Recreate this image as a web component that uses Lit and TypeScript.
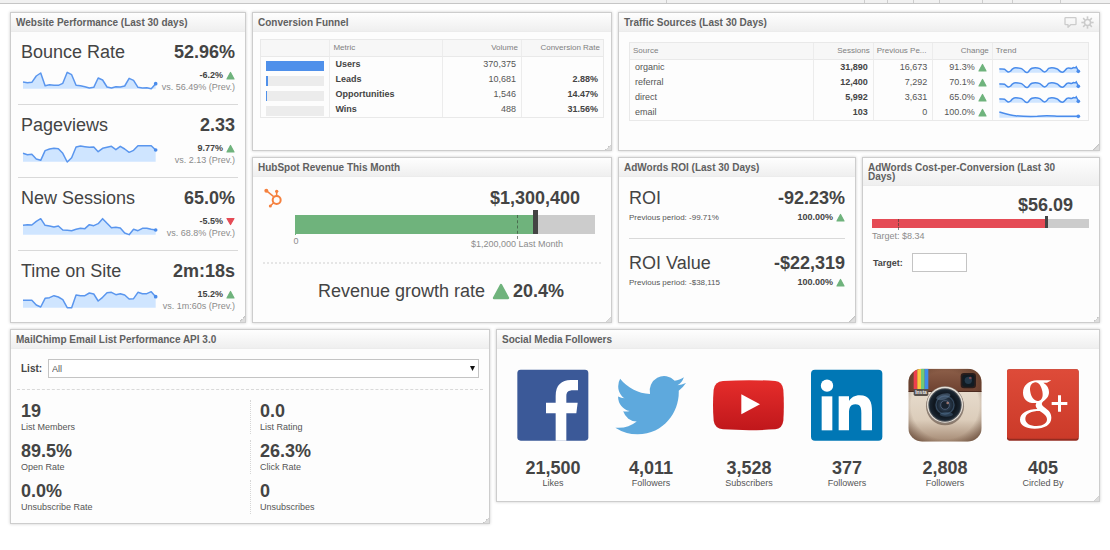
import { LitElement, html, svg, css, nothing, TemplateResult } from "lit";
import { customElement, property } from "lit/decorators.js";

/* ---------- shared pieces ---------- */

const shared = css`
  * { box-sizing: border-box; }
  .big { font-size: 18px; line-height: 20px; color: #444; white-space: nowrap; }
  .strong { font-weight: bold; }
  .small { font-size: 9px; line-height: 11px; color: #555; white-space: nowrap; }
  .muted { color: #8c8c8c; }
  .row { display: flex; justify-content: space-between; align-items: baseline; }
  .delta { display: flex; justify-content: flex-end; align-items: center; gap: 3px; font-weight: bold; color: #444; }
`;

const triangle = (up: boolean, size = 9) => svg`
  <svg width=${size} height=${size} viewBox="0 0 18 18" aria-hidden="true">
    <path d=${up ? "M9 3 L16 16 H2 Z" : "M9 15 L2 3 H16 Z"}
      fill=${up ? "#6fb37c" : "#e54b55"} stroke=${up ? "#6fb37c" : "#e54b55"}
      stroke-width="2.4" stroke-linejoin="round" />
  </svg>`;

@customElement("dash-panel")
export class DashPanel extends LitElement {
  @property() heading = "";
  @property({ type: Boolean }) tools = false;

  static styles = css`
    :host {
      display: flex; flex-direction: column; position: relative; min-width: 0;
      box-sizing: border-box; border: 1px solid #cdcdcd; background: #fdfdfd;
      box-shadow: 0 0 3px rgba(0, 0, 0, 0.2);
    }
    :host::after {
      content: ""; position: absolute; right: 0; bottom: 0; width: 6px; height: 6px;
      background: linear-gradient(135deg, transparent 50%, #c4c4c4 50%, #dedede 65%);
    }
    header {
      display: flex; justify-content: space-between; align-items: flex-start;
      padding: 5px 5px 4px 5px; border-bottom: 1px solid #ececec;
      background: linear-gradient(#fefefe, #efefef);
    }
    h2 { margin: 0; padding-right: 24px; font-size: 10px; line-height: 9px; font-weight: bold; color: #606060; }
    .tools { display: flex; gap: 4px; height: 9px; align-items: center; }
    button { display: block; padding: 0; border: 0; background: none; line-height: 0; cursor: pointer; }
  `;

  render() {
    return html`
      <header>
        <h2>${this.heading}</h2>
        ${this.tools
          ? html`<div class="tools">
              <button aria-label="Comment">
                <svg width="13" height="13" viewBox="0 0 39 39">
                  <path d="M5 5 H34 Q36 5 36 7 V24 Q36 26 34 26 H20 L12 34 V26 H5 Q3 26 3 24 V7 Q3 5 5 5 Z"
                    fill="none" stroke="#cccccc" stroke-width="4" stroke-linejoin="round" />
                </svg>
              </button>
              <button aria-label="Settings">
                <svg width="13" height="13" viewBox="0 0 36 36">
                  <circle cx="18" cy="18" r="8.5" fill="none" stroke="#cacaca" stroke-width="4.4" />
                  ${[0, 45, 90, 135, 180, 225, 270, 315].map(
                    (a) => svg`<path d="M18 1 V8" stroke="#cacaca" stroke-width="4.4" transform="rotate(${a} 18 18)" />`
                  )}
                </svg>
              </button>
            </div>`
          : nothing}
      </header>
      <slot></slot>
    `;
  }
}

/* ---------- website performance ---------- */

const performance30 = [
  { name: "Bounce Rate", value: "52.96%", delta: "-6.2%", up: true, prev: "vs. 56.49% (Prev.)",
    points: [36,38,37,18,9,47,44,46,46,40,7,14,46,47,50,54,52,24,30,51,54,50,51,48,25,31,52,54,53,56,41] },
  { name: "Pageviews", value: "2.33", delta: "9.77%", up: true, prev: "vs. 2.13 (Prev.)",
    points: [31,35,34,48,52,23,18,16,17,31,57,44,12,9,11,13,12,26,16,13,10,20,10,18,28,22,8,8,8,8,21] },
  { name: "New Sessions", value: "65.0%", delta: "-5.5%", up: false, prev: "vs. 68.8% (Prev.)",
    points: [28,26,27,16,8,28,30,33,30,42,43,44,40,37,38,26,29,23,8,22,35,34,36,51,56,40,44,37,37,40,42] },
  { name: "Time on Site", value: "2m:18s", delta: "15.2%", up: true, prev: "vs. 1m:60s (Prev.)",
    points: [34,34,34,48,54,28,26,20,24,32,56,56,18,20,20,12,15,36,25,11,10,17,14,18,30,29,10,14,14,8,23] },
];

const sparkline = (points: number[]) => {
  const step = 398 / (points.length - 1);
  const line = points.map((y, i) => `${(3 + i * step).toFixed(1)},${y}`).join(" ");
  return html`<svg class="spark" width="136" height="20" viewBox="0 0 408 60" aria-hidden="true">
    <polygon points="3,56 ${line} 401,56" fill="#cfe5ff" />
    <polyline points=${line} fill="none" stroke="#5a96ee" stroke-width="4.5" stroke-linejoin="round" />
    <circle cx="401" cy=${points[points.length - 1]} r="5.5" fill="#4a8ceb" />
  </svg>`;
};

@customElement("site-performance")
export class SitePerformance extends LitElement {
  static styles = [shared, css`
    :host { display: block; padding: 0 7px; }
    .item { padding: 10px 3px 11px 3px; border-bottom: 1px solid #d9d9d9; }
    .item:last-child { border-bottom: 0; padding-bottom: 0; }
    .detail { display: flex; justify-content: space-between; align-items: flex-start; margin-top: 7px; line-height: 0; }
    .spark { margin: 1px 0 0 1px; }
    .side { text-align: right; }
    .side .small { line-height: 12px; }
  `];
  render() {
    return performance30.map((m) => html`
      <div class="item">
        <div class="row big"><span>${m.name}</span><span class="strong">${m.value}</span></div>
        <div class="detail">
          ${sparkline(m.points)}
          <div class="side">
            <div class="small delta">${m.delta}${triangle(m.up)}</div>
            <div class="small muted">${m.prev}</div>
          </div>
        </div>
      </div>`);
  }
}

/* ---------- tables ---------- */

const tableStyles = css`
  table { width: 100%; border-collapse: separate; border-spacing: 0; table-layout: fixed;
    border: 1px solid #e9e9e9; font-size: 9px; color: #555; }
  th { height: 17px; padding: 0 3px; background: #f7f7f7; border-bottom: 1px solid #e9e9e9; font-size: 8px;
    font-weight: normal; color: #808080; text-align: left; line-height: 12px; white-space: nowrap; }
  td { height: 15px; padding: 0 5px; line-height: 15px; white-space: nowrap; }
  th + th, td + td { border-left: 1px solid #ececec; }
  .num { text-align: right; }
  .strong { color: #444; }
`;

const funnel = [
  { metric: "Users", volume: "370,375", rate: "", share: 100 },
  { metric: "Leads", volume: "10,681", rate: "2.88%", share: 3 },
  { metric: "Opportunities", volume: "1,546", rate: "14.47%", share: 1 },
  { metric: "Wins", volume: "488", rate: "31.56%", share: 0 },
];

@customElement("conversion-funnel")
export class ConversionFunnel extends LitElement {
  static styles = [shared, tableStyles, css`
    :host { display: block; padding: 7px; }
    .c1 { width: 20%; } .c2 { width: 33%; } .c3 { width: 23%; }
    td:first-child { vertical-align: bottom; }
    .track { height: 10px; margin-bottom: 1px; background: #ececec; }
    .fill { height: 100%; background: #4f90ea; }
  `];
  render() {
    return html`<table>
      <thead><tr>
        <th class="c1" aria-label="Share"></th><th class="c2">Metric</th>
        <th class="c3 num">Volume</th><th class="num">Conversion Rate</th>
      </tr></thead>
      <tbody>${funnel.map((r) => html`<tr>
        <td><div class="track"><div class="fill" style="width:${r.share}%"></div></div></td>
        <td class="strong">${r.metric}</td><td class="num">${r.volume}</td><td class="num strong">${r.rate}</td>
      </tr>`)}</tbody>
    </table>`;
  }
}

const wave = "M4 11 C10 13 14 11 20 13 C27 20 31 24 38 18 C45 6 53 8 62 9 C74 9 76 15 81 20 C88 26 91 21 96 14 C101 7 110 8 119 9 C130 10 131 17 137 20 C144 24 147 15 152 10 C160 7 170 9 176 11 C184 15 185 21 191 21 C198 24 201 14 207 10 C214 6 220 14 225 8 C229 7 232 11 235 6 L241 18";
const traffic = [
  { source: "organic", sessions: "31,890", prev: "16,673", change: "91.3%", trend: wave },
  { source: "referral", sessions: "12,400", prev: "7,292", change: "70.1%", trend: wave },
  { source: "direct", sessions: "5,992", prev: "3,631", change: "65.0%", trend: wave },
  { source: "email", sessions: "103", prev: "0", change: "100.0%",
    trend: "M4 6 C20 10 38 16 52 17 C80 20 98 20 118 19 C145 16 160 18 182 19 L241 19" },
];

@customElement("traffic-sources")
export class TrafficSources extends LitElement {
  static styles = [shared, tableStyles, css`
    :host { display: block; padding: 10px; }
    .c1 { width: 40%; } .c2, .c3, .c4 { width: 13%; }
    .delta { font-weight: normal; color: #555; }
    td.trend { vertical-align: bottom; line-height: 0; }
  `];
  render() {
    return html`<table>
      <thead><tr>
        <th class="c1">Source</th><th class="c2 num">Sessions</th><th class="c3" title="Previous Period">Previous Pe...</th>
        <th class="c4 num">Change</th><th>Trend</th>
      </tr></thead>
      <tbody>${traffic.map((r) => html`<tr>
        <td>${r.source}</td><td class="num strong">${r.sessions}</td><td class="num">${r.prev}</td>
        <td><div class="delta">${r.change}${triangle(true)}</div></td>
        <td class="trend"><svg width="83" height="10" viewBox="0 0 249 30" aria-hidden="true">
          <path d="${r.trend} V23 H4 Z" fill="#cfe5ff" />
          <path d=${r.trend} fill="none" stroke="#4a8ceb" stroke-width="4.5" />
          <circle cx="241" cy="19" r="5.5" fill="#4a8ceb" />
        </svg></td>
      </tr>`)}</tbody>
    </table>`;
  }
}

/* ---------- bullet bars ---------- */

@customElement("bullet-bar")
export class BulletBar extends LitElement {
  @property({ type: Number }) value = 0;
  @property({ type: Number }) target = 0;
  @property() label = "";
  @property() tone = "green";

  static styles = [shared, css`
    :host { display: block; }
    .anchor { display: flex; justify-content: center; width: 0; }
    .bar { position: relative; height: 19px; margin-top: 7px; background: #cccccc; }
    .fill { height: 100%; background: #6fb37c; }
    .marker { position: absolute; top: -5px; bottom: 0; width: 5px; margin-left: -2px; background: #444; }
    .target { position: absolute; top: 0; bottom: -5px; border-left: 1px dashed rgba(50, 60, 50, 0.6); }
    .red .bar { height: 9px; margin-top: 4px; }
    .red .fill { background: #e54b55; }
    .red .marker { top: -3px; width: 3px; margin-left: -1px; }
    .red .target { bottom: -2px; }
  `];
  render() {
    return html`<div class=${this.tone}>
      <div class="anchor" style="margin-left:${this.value}%"><span class="big strong">${this.label}</span></div>
      <div class="bar">
        <div class="fill" style="width:${this.value}%"></div>
        <div class="target" style="left:${this.target}%"></div>
        <div class="marker" style="left:${this.value}%"></div>
      </div>
    </div>`;
  }
}

@customElement("hubspot-revenue")
export class HubspotRevenue extends LitElement {
  static styles = [shared, css`
    :host { display: block; padding: 11px 10px 0 10px; }
    .chart { display: grid; grid-template-columns: 20px 1fr; column-gap: 12px; padding: 0 6px 0 0; }
    .scale { display: grid; grid-column: 2; }
    .scale > * { grid-area: 1 / 1; }
    .zero { width: 0; height: 13px; display: flex; justify-content: center; align-items: flex-end; border-left: 1px solid #6fb37c; border-image: linear-gradient(#6fb37c 2px, transparent 2px) 1; }
    .last { display: flex; justify-content: center; width: 0; padding-top: 5px; }
    .growth { display: flex; justify-content: center; align-items: center; gap: 7px; margin-top: 12px;
      padding: 17px 0 17px 18px; border-top: 2px dotted #e6e6e6; }
    .growth .strong { display: flex; align-items: center; gap: 3px; }
  `];
  render() {
    return html`
      <div class="chart">
        <svg width="20" height="20" viewBox="0 0 60 60" aria-label="HubSpot" role="img">
          <g stroke="#f5813f" fill="none">
            <circle cx="41" cy="36" r="12" stroke-width="6" />
            <path d="M10 8 L32 26 M41 10 V25 M32 44 L22 54" stroke-width="4.5" />
          </g>
          <g fill="#f5813f"><circle cx="10" cy="8" r="6" /><circle cx="41" cy="10" r="5" /><circle cx="22" cy="54" r="4.5" /></g>
        </svg>
        <bullet-bar value="80" target="74" label="$1,300,400"></bullet-bar>
        <div class="scale">
          <span class="zero small muted">0</span>
          <span class="last small muted" style="margin-left:74%">$1,200,000 Last Month</span>
        </div>
      </div>
      <div class="growth big">Revenue growth rate <span class="strong">${triangle(true, 18)}20.4%</span></div>
    `;
  }
}

@customElement("adwords-roi")
export class AdwordsRoi extends LitElement {
  static styles = [shared, css`
    :host { display: block; padding: 0 10px; }
    .item { padding: 11px 0 15px 0; }
    .item + .item { border-top: 1px solid #d9d9d9; padding-top: 14px; }
    .sub { margin-top: 4px; align-items: center; }
    .prev { font-size: 8px; }
  `];
  private item(name: string, value: string, prev: string) {
    return html`<div class="item">
      <div class="row big"><span>${name}</span><span class="strong">${value}</span></div>
      <div class="row sub small"><span class="prev">${prev}</span><span class="delta">100.00%${triangle(true)}</span></div>
    </div>`;
  }
  render() {
    return html`${this.item("ROI", "-92.23%", "Previous period: -99.71%")}
      ${this.item("ROI Value", "-$22,319", "Previous period: -$38,115")}`;
  }
}

@customElement("adwords-cost")
export class AdwordsCost extends LitElement {
  static styles = [shared, css`
    :host { display: block; padding: 9px 10px 0 9px; }
    .caption { margin-top: 3px; }
    .field { display: flex; align-items: center; gap: 9px; margin-top: 11px; padding-left: 1px; font-size: 9px; font-weight: bold; color: #444; }
    input { width: 55px; height: 19px; padding: 0 3px; border: 1px solid #c4c4c4; background: #fff; font: 9px "Liberation Sans", Arial, sans-serif; }
  `];
  render() {
    return html`
      <bullet-bar tone="red" value="80" target="12" label="$56.09"></bullet-bar>
      <div class="caption small muted">Target: $8.34</div>
      <div class="field"><label for="target">Target:</label><input id="target" type="text" /></div>
    `;
  }
}

/* ---------- mailchimp ---------- */

const listStats = [
  ["19", "List Members"], ["0.0", "List Rating"],
  ["89.5%", "Open Rate"], ["26.3%", "Click Rate"],
  ["0.0%", "Unsubscribe Rate"], ["0", "Unsubscribes"],
];

@customElement("mail-performance")
export class MailPerformance extends LitElement {
  static styles = [shared, css`
    :host { display: block; padding: 10px 6px 9px 6px; }
    .field { display: flex; align-items: center; gap: 6px; padding: 0 4px 11px 4px; border-bottom: 1px dashed #d9d9d9; }
    label { font-size: 10px; font-weight: bold; color: #444; }
    .pick { position: relative; flex: 1; display: flex; }
    select { appearance: none; flex: 1; height: 19px; padding: 0 3px; border: 1px solid #c4c4c4; border-radius: 0;
      background: #fff; color: #555; font: 9px "Liberation Sans", Arial, sans-serif; }
    .pick svg { position: absolute; right: 4px; top: 7px; pointer-events: none; }
    .stats { display: grid; grid-template-columns: 1fr 1fr; row-gap: 6px; padding: 10px 4px 0 4px; }
    .stat { padding: 1px 0; }
    .stat:nth-child(even) { border-left: 1px dotted #d6d6d6; padding-left: 9px; }
    .stat .small { line-height: 12px; }
  `];
  render() {
    return html`
      <div class="field">
        <label for="list">List:</label>
        <div class="pick">
          <select id="list"><option>All</option></select>
          <svg width="5" height="5" viewBox="0 0 5 5" aria-hidden="true"><path d="M0 0 H5 L2.5 5 Z" fill="#111" /></svg>
        </div>
      </div>
      <div class="stats">${listStats.map(([v, l]) => html`
        <div class="stat"><div class="big strong">${v}</div><div class="small">${l}</div></div>`)}</div>
    `;
  }
}

/* ---------- social ---------- */

const facebook = svg`
  <rect x="1" y="2" width="213" height="213" rx="10" fill="#3b5998" />
  <path d="M116 215 V133 H87 V101 H116 V81 C116 48 134 33 161 33 H183 V64 H169 C153 64 148 70 148 82 V101 H182 L178 133 H148 V215 Z" fill="#fff" />`;

const twitter = svg`
  <g transform="translate(1 1) scale(8.83 8.95)">
    <path fill="#5ea9dd" d="M23.953 4.57a10 10 0 01-2.825.775 4.958 4.958 0 002.163-2.723c-.951.555-2.005.959-3.127 1.184a4.92 4.92 0 00-8.384 4.482C7.69 8.095 4.067 6.13 1.64 3.162a4.822 4.822 0 00-.666 2.475c0 1.71.87 3.213 2.188 4.096a4.904 4.904 0 01-2.228-.616v.06a4.923 4.923 0 003.946 4.827 4.996 4.996 0 01-2.212.085 4.936 4.936 0 004.604 3.417 9.867 9.867 0 01-6.102 2.105c-.39 0-.779-.023-1.17-.067a13.995 13.995 0 007.557 2.209c9.053 0 13.998-7.496 13.998-13.985 0-.21 0-.42-.015-.63A9.935 9.935 0 0024 4.59z" />
  </g>`;

const youtube = svg`
  <defs><linearGradient id="yt" x1="0" y1="0" x2="0" y2="1"><stop offset="0" stop-color="#e52d2b" /><stop offset="1" stop-color="#c0171b" /></linearGradient></defs>
  <path d="M30 36 Q108 31 187 36 Q208 38 211 62 Q214 109 211 155 Q208 178 187 181 Q108 186 30 181 Q5 178 2 155 Q-2 109 2 62 Q5 38 30 36 Z" fill="url(#yt)" />
  <path d="M85 76 L141 106 L85 136 Z" fill="#fff" />`;

const linkedin = svg`
  <rect x="0" y="2" width="214" height="213" rx="12" fill="#0077b5" />
  <circle cx="48" cy="50" r="18.5" fill="#fff" />
  <rect x="32" y="82" width="32" height="102" fill="#fff" />
  <path d="M83 82 H114 V96 C120 86 131 79 146 79 C177 79 183 100 183 127 V184 H151 V133 C151 121 151 106 133 106 C117 106 114 119 114 132 V184 H83 Z" fill="#fff" />`;

const instagram = svg`
  <defs>
    <linearGradient id="ig-body" x1="0" y1="0" x2="0" y2="1"><stop offset="0" stop-color="#efe6da" /><stop offset=".7" stop-color="#dccdbb" /><stop offset="1" stop-color="#a58a74" /></linearGradient>
    <radialGradient id="ig-glow" cx=".5" cy=".5" r=".68"><stop offset=".68" stop-color="#4a2c1c" stop-opacity="0" /><stop offset="1" stop-color="#4a2c1c" stop-opacity=".7" /></radialGradient>
    <linearGradient id="ig-top" x1="0" y1="0" x2="0" y2="1"><stop offset="0" stop-color="#8d5f49" /><stop offset="1" stop-color="#6d4130" /></linearGradient>
    <radialGradient id="ig-lens"><stop offset="0" stop-color="#4b5c74" /><stop offset=".35" stop-color="#263546" /><stop offset=".7" stop-color="#0e151d" /><stop offset="1" stop-color="#1b2733" /></radialGradient>
    <clipPath id="ig-clip"><rect x="-2" y="-1" width="220" height="219" rx="42" /></clipPath>
  </defs>
  <g clip-path="url(#ig-clip)">
    <rect x="-2" y="-1" width="220" height="219" fill="url(#ig-body)" />
    <rect x="-2" y="-1" width="220" height="69" fill="url(#ig-top)" />
    <rect x="-2" y="66" width="220" height="3" fill="#4b2a1f" />
    <rect x="-2" y="-1" width="220" height="219" fill="url(#ig-glow)" />
    <rect x="14" y="-1" width="11" height="61" fill="#ee3f4c" />
    <rect x="25" y="-1" width="11" height="61" fill="#fbc63f" />
    <rect x="36" y="-1" width="11" height="61" fill="#6fca78" />
    <rect x="47" y="-1" width="11" height="61" fill="#3f8bea" />
  </g>
  <rect x="14" y="60" width="44" height="21" rx="5" fill="#57504c" />
  <text x="36" y="75" font-size="15" font-weight="bold" fill="#eee" text-anchor="middle">Insta</text>
  <rect x="155" y="12" width="46" height="46" rx="10" fill="#2a1d1b" />
  <rect x="160" y="17" width="36" height="36" rx="8" fill="#111b22" />
  <circle cx="178" cy="34" r="11" fill="#24394a" /><circle cx="184" cy="27" r="4" fill="#7b4a55" />
  <circle cx="108" cy="112" r="57" fill="#5c4a3e" opacity=".6" />
  <circle cx="108" cy="108" r="56" fill="#8c8078" />
  <circle cx="108" cy="107" r="54" fill="#e6e0d8" />
  <circle cx="108" cy="108" r="50" fill="#4a4f55" />
  <circle cx="108" cy="108" r="47" fill="url(#ig-lens)" />
  <circle cx="108" cy="108" r="27" fill="none" stroke="#34485d" stroke-width="4" />
  <circle cx="108" cy="108" r="13" fill="#18222e" stroke="#4a5a72" stroke-width="3" />
  <ellipse cx="103" cy="83" rx="22" ry="9" fill="#6c8aa8" opacity=".45" transform="rotate(-15 103 83)" />
  <ellipse cx="112" cy="136" rx="20" ry="7" fill="#55789b" opacity=".4" />
  <circle cx="116" cy="102" r="4" fill="#b8887f" opacity=".8" />`;

const googleplus = svg`
  <defs><linearGradient id="gp" x1="0" y1="0" x2="0" y2="1"><stop offset="0" stop-color="#de4b39" /><stop offset="1" stop-color="#cb3a29" /></linearGradient></defs>
  <rect x="0" y="1" width="215" height="214" rx="7" fill="#932b20" />
  <rect x="0" y="1" width="215" height="208" rx="7" fill="url(#gp)" />
  <g fill="#fff" fill-rule="evenodd">
    <path d="M90 34 H133 L120 41 H109 C121 48 126 58 126 69 C126 83 118 90 109 97 C102 103 103 108 111 114 C125 124 133 132 133 146 C133 167 113 179 83 179 C56 179 39 168 39 152 C39 132 61 121 91 120 C86 114 84 109 88 102 C62 104 48 91 48 71 C48 49 66 34 90 34 Z
      M84 40 C72 42 67 53 70 69 C73 86 83 97 94 96 C105 94 109 83 106 67 C103 50 94 38 84 40 Z
      M98 126 C73 126 55 134 55 149 C55 163 69 171 89 171 C109 171 120 163 120 151 C120 141 111 135 98 126 Z" />
    <path d="M153 79 H162 V99 H181 V108 H162 V128 H153 V108 H134 V99 H153 Z" />
  </g>`;

const networks: { icon: TemplateResult<2>; name: string; value: string; label: string }[] = [
  { icon: facebook, name: "Facebook", value: "21,500", label: "Likes" },
  { icon: twitter, name: "Twitter", value: "4,011", label: "Followers" },
  { icon: youtube, name: "YouTube", value: "3,528", label: "Subscribers" },
  { icon: linkedin, name: "LinkedIn", value: "377", label: "Followers" },
  { icon: instagram, name: "Instagram", value: "2,808", label: "Followers" },
  { icon: googleplus, name: "Google+", value: "405", label: "Circled By" },
];

@customElement("social-followers")
export class SocialFollowers extends LitElement {
  static styles = [shared, css`
    :host { display: grid; grid-template-columns: repeat(6, 1fr); padding: 20px 7px 12px 7px; }
    .net { display: flex; flex-direction: column; align-items: center; }
    .net svg { overflow: visible; margin-bottom: 17px; }
  `];
  render() {
    return networks.map((n) => html`<div class="net">
      <svg width="72" height="72" viewBox="0 0 216 216" role="img" aria-label=${n.name}>${n.icon}</svg>
      <div class="big strong">${n.value}</div><div class="small">${n.label}</div>
    </div>`);
  }
}

/* ---------- page ---------- */

@customElement("app-root")
export class AppRoot extends LitElement {
  static styles = css`
    :host { display: block; min-height: 100vh; background: #fff; font-family: "Liberation Sans", Arial, sans-serif; }
    .strip { display: flex; height: 3px; background: #f1f1f1; border-bottom: 1px solid #c6c6c6; }
    .cell + .cell { border-left: 1px solid #cdcdcd; }
    main { padding: 8px 10px; }
    .top { display: grid; gap: 6px; grid-template-columns: 236fr 360fr 238fr 238fr;
      grid-template-rows: minmax(139px, auto) minmax(166px, auto); }
    .tall { grid-row: span 2; }
    .wide { grid-column: span 2; }
    .bottom { display: grid; gap: 6px; margin-top: 6px; grid-template-columns: 480fr 604fr; align-items: start; }
  `;
  render() {
    return html`
      <div class="strip">${[672, 199, 22, 25, 25, 43, 29, 48, 49].map(
        (w) => html`<span class="cell" style="flex:${w} 1 0"></span>`)}</div>
      <main>
        <div class="top">
          <dash-panel class="tall" heading="Website Performance (Last 30 days)"><site-performance></site-performance></dash-panel>
          <dash-panel heading="Conversion Funnel"><conversion-funnel></conversion-funnel></dash-panel>
          <dash-panel class="wide" heading="Traffic Sources (Last 30 Days)" tools><traffic-sources></traffic-sources></dash-panel>
          <dash-panel heading="HubSpot Revenue This Month"><hubspot-revenue></hubspot-revenue></dash-panel>
          <dash-panel heading="AdWords ROI (Last 30 Days)"><adwords-roi></adwords-roi></dash-panel>
          <dash-panel heading="AdWords Cost-per-Conversion (Last 30 Days)"><adwords-cost></adwords-cost></dash-panel>
        </div>
        <div class="bottom">
          <dash-panel heading="MailChimp Email List Performance API 3.0"><mail-performance></mail-performance></dash-panel>
          <dash-panel heading="Social Media Followers"><social-followers></social-followers></dash-panel>
        </div>
      </main>
    `;
  }
}
